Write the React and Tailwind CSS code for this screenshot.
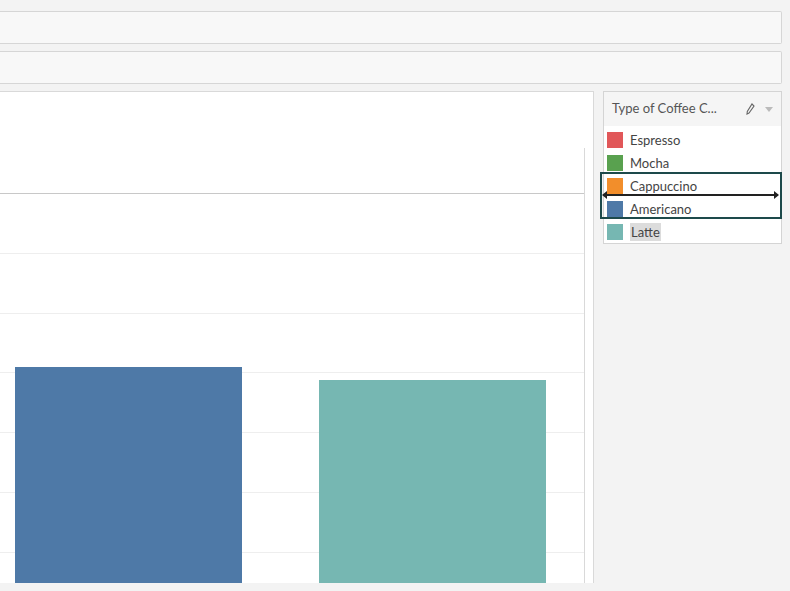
export default function App() {
  const items = [
    ["Espresso", "#e15759"],
    ["Mocha", "#59a14f"],
    ["Cappuccino", "#f28e2b"],
    ["Americano", "#4e79a7"],
    ["Latte", "#76b7b2"],
  ];
  return (
    <div className="w-[790px] h-[591px] bg-[#f3f3f3] overflow-hidden flex flex-col" style={{ fontFamily: "Lato, 'Open Sans', sans-serif" }}>
      <div className="h-[11px]" />
      <div className="h-[33px] mr-[8px] bg-[#f8f8f8] border border-[#d6d6d6] border-l-0 rounded-r-[2px]" />
      <div className="h-[7px]" />
      <div className="h-[33px] mr-[8px] bg-[#f8f8f8] border border-[#d6d6d6] border-l-0 rounded-r-[2px]" />
      <div className="h-[7px]" />
      <div className="flex flex-1 min-h-0">
        <div className="w-[594px] h-[492px] bg-white border-t border-r border-[#d9d9d9] flex">
          <div className="w-[584px] flex flex-col">
            <div className="h-[102px] border-b border-[#c8c8c8]" />
            <div className="relative flex-1">
              {[59, 119, 178, 238, 298, 358].map((t) => (
                <div key={t} className="absolute left-0 right-0 h-px bg-[#eeeeee]" style={{ top: t }} />
              ))}
              <div className="absolute inset-0 flex items-end">
                <div className="ml-[15px] w-[227px] h-[216px] bg-[#4e79a7]" />
                <div className="ml-[77px] w-[227px] h-[203px] bg-[#76b7b2]" />
              </div>
            </div>
          </div>
          <div className="w-px mt-[56px] bg-[#d9d9d9]" />
        </div>
        <div className="ml-[9px] relative">
          <div className="w-[179px] h-[153px] border border-[#d4d4d4] bg-white">
            <div className="h-[34px] bg-[#f5f5f5] flex items-center pl-[8px] pr-[8px] text-[13px] text-[#555]">
              <span className="flex-1">Type of Coffee C...</span>
              <svg width="10" height="12" viewBox="0 0 10 12" className="mr-[10px]"><path d="M7 1 L9 3 L4 10 L2 11 L2.3 8.5 Z" fill="none" stroke="#666" strokeWidth="1.1" /></svg>
              <svg width="8" height="5" viewBox="0 0 8 5"><path d="M0 0 L8 0 L4 5 Z" fill="#bbb" /></svg>
            </div>
            <div className="pt-[2px]">
              {items.map(([n, c]) => (
                <div key={n} className="h-[23px] flex items-center pl-[3px]">
                  <div className="w-[16px] h-[16px]" style={{ background: c }} />
                  <span className={"ml-[7px] text-[13px] text-[#444] leading-[18px] " + (n === "Latte" ? "bg-[#dcdcdc] px-[1px] -ml-0 " : "")}>{n}</span>
                </div>
              ))}
            </div>
          </div>
          <div className="absolute left-[-3px] top-[81px] w-[182px] h-[47px] border-2 border-[#1d4a4b]">
            <div className="absolute left-[1px] right-[2px] top-[20px] h-[2px] bg-[#222]" />
            <svg className="absolute left-0 top-[17px]" width="5" height="8" viewBox="0 0 5 8"><path d="M0 4 L5 0 L5 8 Z" fill="#222" /></svg>
            <svg className="absolute right-[1px] top-[17px]" width="5" height="8" viewBox="0 0 5 8"><path d="M5 4 L0 0 L0 8 Z" fill="#222" /></svg>
          </div>
        </div>
      </div>
    </div>
  );
}
